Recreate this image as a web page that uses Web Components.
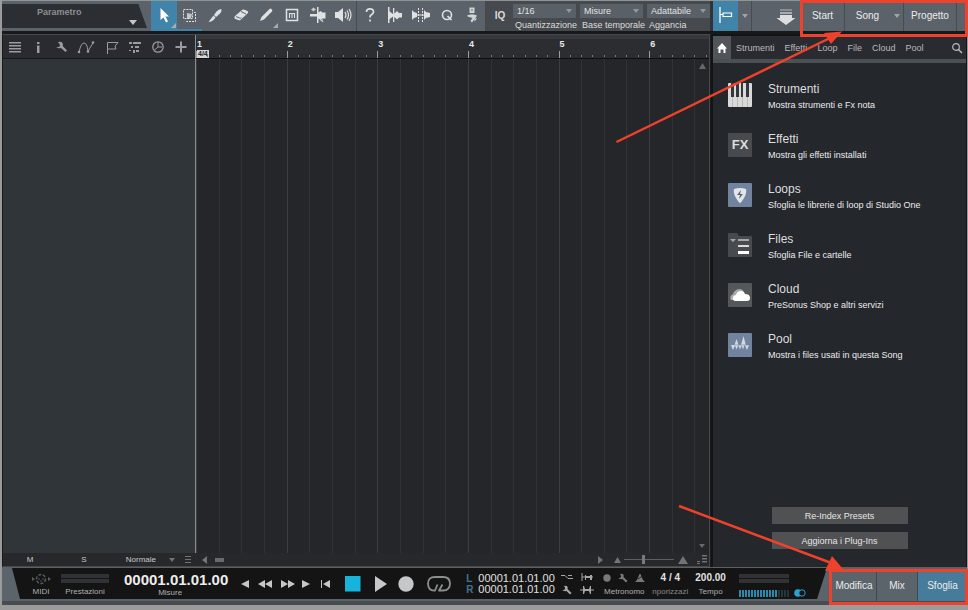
<!DOCTYPE html>
<html lang="it">
<head>
<meta charset="utf-8">
<title>Song</title>
<style>
html,body{height:100%}
body{margin:0;background:#9b9b9b;font-family:"Liberation Sans",Arial,sans-serif;font-size:9px;line-height:12px;color:#dcdcdc;overflow:hidden}
</style>
</head>
<body>
<daw-window></daw-window>
<script>
const ICONS = {
  arrow:[24,24,'<path d="M8.500 5v12l3-2.500 2.500 5 2-1-2.500-5h3.500z"/>'],
  range:[24,24,'<g fill="none" stroke="currentColor"><rect x="6.500" y="6.500" width="9" height="9" stroke-dasharray="2 1"/><path d="M17 9.500h1.500v9h-9V17" stroke-dasharray="2 1"/></g><path d="M10 10l5 1-1 4-4 1z" opacity=".8"/>'],
  knife:[24,24,'<path d="M18.500 6q-3 0-5 2.500L11 12l2 2 3.500-3Q19 9 18.500 6z"/><path d="M10.500 12.500l-5 6.500q3 0 5-2l2-2.500z"/>'],
  eraser:[24,24,'<path d="M6 13l7-6q1-1 2.500-.3l3 1.300q1.500 1 .2 2.300l-7 6.500q-1 .8-2 .4L6.500 16q-2-1-.5-3z"/><path d="M7 13.500l4 1.700q.8.300 1.500-.4M12 8.500l5 2.500" stroke="#5d646b" fill="none"/>'],
  pencil:[24,24,'<path d="M6 18l1.500-4 8-8q1-1 2.200.3t.3 2.200l-8 8z"/>'],
  mute:[24,24,'<rect x="6.500" y="6.500" width="11" height="11" fill="none" stroke="currentColor" stroke-width="1.500"/><path d="M9.500 15v-5M9.500 10.500h5V15M12 10.500V15" fill="none" stroke="currentColor" stroke-width="1.100"/>'],
  bend:[24,24,'<path d="M4 11h7V4h1.500v5.500l2-1.500 2 1.500h3v6h-3l-2 1.500-2-1.500V20H11v-6.500H4z"/><path d="M5 6.500l2.500-2L10 6.500l-2.500 2zM14 17.500l2.500-1.500 1 3.500z" opacity=".8"/>'],
  speaker:[24,24,'<path d="M4 9h3l5-4v14l-5-4H4z"/><path d="M14 9q2 3 0 6M16 7.500q3 4.500 0 9M18 6q4 6 0 12" fill="none" stroke="currentColor" stroke-width="1.200"/>'],
  help:[24,24,'<path d="M8.500 9q0-3.200 3.500-3.200T15.500 9q0 1.500-1.800 2.600T12 14.500M12 16.500v2" fill="none" stroke="currentColor" stroke-width="1.700"/>'],
  cut:[24,24,'<path d="M5 4h1.500v16H5zM10 5h1.300v14H10z"/><path d="M6 8l4 3 2-1 2-2 2 2h3v4.500h-3l-2 2-2-2-2-1-4 3z"/>'],
  gap:[24,24,'<path d="M3 7l2 2 3 1v4l-3 1-2 2zM15 7l2 2 4 1v4l-4 1-2 2z"/><path d="M9.500 5v14M13.500 5v14" stroke="currentColor" stroke-dasharray="2 1" fill="none"/><path d="M7 12h10" stroke="currentColor"/>'],
  quant:[24,24,'<circle cx="12" cy="12" r="4.500" fill="none" stroke="currentColor" stroke-width="1.600"/><path d="M12.500 13l4 4" stroke="currentColor" stroke-width="1.700"/>'],
  steps:[24,24,'<path d="M9.500 4.500h5v5.500h-5zM7.500 12h9v1.500l-4.500 6-1.500-1.500 2-3-5-1.500z" opacity=".9"/><path d="M11 6.500h2v1h-2z" fill="#5d646b"/><path d="M9.500 11h5v.6h-5zM14.500 15.500l2.500 0-2.500 3z"/>'],
  snap:[25,24,'<path d="M7 4v16" stroke="currentColor" stroke-width="1.300"/><path d="M7 11.500h3M10 10h8.500v3.500H10z" fill="none" stroke="currentColor" stroke-width="1.200"/>'],
  down:[24,24,'<path d="M6 5h12v2H6z" opacity=".35"/><path d="M6 8h12v2H6z" opacity=".6"/><path d="M6 11h12v3h3.500L12 21l-9.500-7H6z"/>'],
  list:[14,12,'<path d="M1 1h12v1.500H1zM1 4h12v1.500H1zM1 7h12v1.500H1zM1 10h12v1.500H1z"/>'],
  info:[14,14,'<path d="M6 2h2.500v2H6zM6 5.500h2.500V13H6z"/>'],
  wrench:[14,14,'<path d="M4 2q3-1 4.500 1 .8 1.500.2 3L13 10.500 11.500 12 7 8Q4.500 9 2 7q3.500.5 4-1T4 2z"/>'],
  curve:[18,14,'<path d="M2 12Q4 3 7 3t4 8L16 3" fill="none" stroke="currentColor"/><circle cx="2" cy="12" r="1.300"/><circle cx="11" cy="11.500" r="1.300"/><circle cx="16" cy="2.500" r="1.300"/>'],
  flag:[14,14,'<path d="M2.500 14V2.500h10.500l-3 3.500 1 3H2.500" fill="none" stroke="currentColor"/>'],
  blocks:[14,14,'<path d="M1 2h3v2H1zM5 2h8v2H5zM3 6h2v2H3zM7 6h4v2H7zM5 10h2v3H5zM8 10h3v2H8zM1 10h2v1H1z"/>'],
  clock:[14,14,'<circle cx="7" cy="7" r="5.200" fill="none" stroke="currentColor" stroke-width="1.300"/><path d="M7 2v5L3.500 10M7 7h4" fill="none" stroke="currentColor"/>'],
  plus:[14,14,'<path d="M6 1.500h2V6h4.500v2H8v4.500H6V8H1.500V6H6z"/>'],
  caret:[8,6,'<path d="M1 1h6L4 5z"/>'],
  bigcaret:[10,6,'<path d="M1 1h8L5 6z"/>'],
  left:[8,8,'<path d="M7 0v8L2 4z"/>'], right:[8,8,'<path d="M1 0v8l5-4z"/>'],
  up:[8,6,'<path d="M1 6h7L4.500 0z"/>'], bigup:[12,8,'<path d="M1 8h10L6 0z"/>'],
  home:[12,12,'<path d="M6 1l5 5.500H9.500V11h-2V7.500h-3V11h-2V6.500H1z"/>'],
  search:[12,12,'<circle cx="5" cy="5" r="3.300" fill="none" stroke="currentColor" stroke-width="1.200"/><path d="M7.500 7.500L11 11" stroke="currentColor" stroke-width="1.500"/>'],
  prev:[10,10,'<path d="M9 1v8L1 5z"/>'],
  rew:[16,10,'<path d="M8 1v8L1 5zM15 1v8L8 5z"/>'],
  fwd:[16,10,'<path d="M1 1v8l7-4zM8 1v8l7-4z"/>'],
  next:[10,10,'<path d="M1 1v8l8-4z"/>'],
  start:[12,10,'<path d="M1 1h1v8H1zM10 1v8L3 5z"/>'],
  stop:[16,16,'<path fill="#16b3dc" d="M0 0h15.500v15.500H0z"/>'],
  play:[14,16,'<path d="M1 0v16l12-8z"/>'],
  rec:[16,16,'<circle cx="8" cy="8" r="7.700"/>'],
  loop:[26,18,'<path d="M11.500 9.500l-2.500 6Q2 16 2 8.500 2 2 9 2h8q7 0 7 6.500 0 7-7 7h-4l3.500-6" fill="none" stroke="currentColor" stroke-width="1.800" stroke-linejoin="round"/>'],
  midi:[20,12,'<circle cx="10" cy="6" r="4.500" fill="none" stroke="currentColor" stroke-width="1.500" stroke-dasharray="3 1.500"/><circle cx="8" cy="6" r=".8"/><circle cx="12" cy="6" r=".8"/><circle cx="10" cy="8" r=".8"/><path d="M1 4l3 2-3 2zM17 4l3 2-3 2z"/>'],
  punch:[14,8,'<path d="M1 2.500h4l3 3h5M8 2.500h4" fill="none" stroke="currentColor"/>'],
  pin:[14,10,'<path d="M2 1v8M2 5h4M12 5h1" stroke="currentColor"/><path d="M5 3h1v1h4V3h2v5h-2V6H6v2H5z"/>'],
  pin2:[14,10,'<path d="M0 5h14" stroke="currentColor"/><path d="M3 1h1l1 3h4l1-3h1v8h-1L9 6H5L4 9H3z"/>'],
  wrenchs:[12,10,'<path d="M3 1q2.500-1 3.500.7.500 1.200 0 2.300L10.500 8 9 9.500 5.500 6Q3 6.500 1 5q2.500.2 3-1T3 1z"/>'],
  dot:[8,8,'<circle cx="4" cy="4" r="3.700"/>'],
  metro:[10,10,'<path d="M0 9h10L8 7 5.500 1h-1L2 7z"/><path d="M3 6l6-4" stroke="#141414" stroke-width=".8"/>'],
  grip:[10,9,'<path d="M5 0h5v1.500H5zM5 3h5v1.500H5zM0 6h3v1H0zM5 6h5v1.500H5zM0 8h3v1H0z"/>'],
  piano:[24,24,'<rect width="24" height="24" rx="1" fill="#d9d9d9"/><path fill="#33363b" d="M3 0h3v14H3zM8 0h3v14H8zM13 0h2v14h-2zM18 0h3v14h-3z"/><path d="M4.500 14v10M9.500 14v10M14.500 14v10M19.500 14v10" stroke="#b9b9b9"/>'],
  folder:[24,24,'<path fill="#474a4e" d="M1 0h8l2 3h12q1 0 1 1v19q0 1-1 1H1q-1 0-1-1V1q0-1 1-1z"/><path fill="#a5a7a9" d="M2 6h6L5 9zM10 6h11v2H10z"/><path fill="#d9dadb" d="M10 12h11v2H10z"/><path fill="#fff" d="M10 18h11v3H10z"/>'],
  cloud:[24,24,'<rect width="24" height="24" rx="1" fill="#55585b"/><path fill="#a8abad" d="M3 17q-2-4 2-6 1-4 6-5 5 0 5 5v6z"/><path fill="#fff" d="M7 18q-3-1-2-4 1-2 3-2 1-4 5-4 3 0 4 3 5 0 5 4 0 3-3 3z"/>'],
  pick:[24,24,'<rect width="24" height="24" rx="1" fill="#71839f"/><path fill="#e2e5e9" d="M6 6q6-2 12 0 1 4-2 9-3 5-4 5t-4-5Q5 10 6 6z"/><path fill="#5b6470" d="M13 7l-4 5h3l-1 4 4-5h-3z"/>'],
  pool:[24,24,'<rect width="24" height="24" rx="1" fill="#71839f"/><path fill="#d3d9e1" d="M3 12h3.500l2-6 2 6h2.500l2.500-9 2.300 9H21l-2 5-2-4.500h-.8L15 16.500 13.500 12.500 12 16.500 10.500 12.500h-.3L8.500 16.500 7 12.500 5 17z"/><path d="M6.500 12h14" stroke="#71839f" stroke-width=".6"/>'],
};
const BASE = `*{box-sizing:border-box}button,select,input,a{font:inherit;color:inherit;margin:0}button{appearance:none;border:0;padding:0;background:none;display:flex;align-items:center;justify-content:center}a{text-decoration:none}`;
function define(name, html){
  const t = document.createElement('template');
  customElements.define(name, class extends HTMLElement{
    constructor(){super();
      t.innerHTML = '<style>'+BASE+'</style>'+(typeof html==='function'?html(this):html);
      this.attachShadow({mode:'open'}).append(t.content.cloneNode(true));}
  });
}
const ic = n => `<ui-icon name="${n}"></ui-icon>`;

define('ui-icon', el => {
  const [w,h,b] = ICONS[el.getAttribute('name')];
  return `<style>:host{display:block;flex:none}svg{display:block;fill:currentColor}</style><svg width="${w}" height="${h}" viewBox="0 0 ${w} ${h}" aria-hidden="true">${b}</svg>`;
});

define('tool-button', el => `<style>
:host{display:flex;flex:1 1 24px;min-width:0;position:relative}
button{flex:1;min-width:0;color:#dfe1e2;border-bottom:2px solid transparent}
:host([active]) button{background:#4184a9;color:#fff}
:host([marked]) button{border-color:#4184a9}
:host([more])::after{content:"";position:absolute;right:1px;bottom:3px;border:solid transparent;border-width:0 0 5px 5px;border-bottom-color:#9fb0bb}
</style><button aria-label="${el.getAttribute('icon')}">${ic(el.getAttribute('icon'))}</button>`);

define('param-box', `<style>
:host{display:flex;flex:0 0 149px;padding:3px 4px 3px 0}
button{flex:1;align-items:stretch;justify-content:space-between;background:#2b2e33;clip-path:polygon(0 0,94% 0,100% 100%,0 100%);color:#8d8f92;font-weight:bold;padding:2px 9px 3px 35px}
ui-icon{align-self:flex-end;color:#c4c6c8}
</style><button>Parametro ${ic('bigcaret')}</button>`);

define('select-field', el => `<style>
:host{display:flex;flex-direction:column;flex:1 1 0;min-width:0;gap:1px}
.box{display:flex;align-items:center;background:#5a6067;height:14px;color:#e2e2e2}
select{appearance:none;border:0;background:none;padding:0 0 0 4px;flex:1;min-width:0;height:14px}
ui-icon{color:#92979b;margin-right:3px}
label{padding-left:2px;white-space:nowrap}
</style><div class="box"><select id="s"><option>${el.getAttribute('value')}</option></select>${ic('caret')}</div><label for="s">${el.getAttribute('label')}</label>`);

define('top-bar', `<style>
:host{display:flex;flex:0 0 34px;background:#5c6269;border-top:1px solid #8f9597;border-bottom:3px solid #17191b}
.group{display:flex;flex:0 0 205px}
.edit{flex-basis:129px}
.sep{border-left:1px solid #464c52}
.quant{display:flex;background:#464a4e;flex:0 0 228px;padding:3px 0 0 6px;gap:4px;border-right:3px solid #303439}
.iq{flex:0 0 18px;font-weight:bold;font-size:10px;padding-bottom:4px}
.snap{flex:0 0 25px}
.caret{flex:0 0 13px;color:#a0a4a7}
.space{flex:1;display:flex;align-items:center;justify-content:flex-end;padding-right:2px;color:#dedede}
nav{display:flex;font-size:10px}
nav button{border-left:1px solid #464c52;color:#ececec}
</style>
<param-box></param-box>
<div class="group"><tool-button icon="arrow" active more></tool-button><tool-button icon="range" marked></tool-button><tool-button icon="knife"></tool-button><tool-button icon="eraser"></tool-button><tool-button icon="pencil" more></tool-button><tool-button icon="mute"></tool-button><tool-button icon="bend"></tool-button><tool-button icon="speaker"></tool-button></div>
<div class="group edit sep"><tool-button icon="help"></tool-button><tool-button icon="cut"></tool-button><tool-button icon="gap"></tool-button><tool-button icon="quant"></tool-button><tool-button icon="steps"></tool-button></div>
<div class="quant"><button class="iq">IQ</button><select-field value="1/16" label="Quantizzazione"></select-field><select-field value="Misure" label="Base temporale"></select-field><select-field value="Adattabile" label="Aggancia"></select-field></div>
<tool-button class="snap" icon="snap" active></tool-button><button class="caret" aria-label="Opzioni">${ic('caret')}</button>
<div class="space sep">${ic('down')}</div>
<nav><button style="width:44px">Start</button><button style="width:46px">Song</button><button class="caret" style="border:0" aria-label="Songs">${ic('caret')}</button><button style="width:53px">Progetto</button><button style="width:11px" aria-label="Altro"></button></nav>`);

define('track-list', `<style>
:host{display:flex;flex-direction:column;flex:0 0 193px;border-right:1px solid #898c8e}
.tools{display:flex;align-items:center;justify-content:space-between;padding:0 7px 0 5px;height:24px;background:#292b30;color:#9a9c9f;border-bottom:1px solid #15171a}
.body{flex:1;background:#30353a}
.foot{display:flex;align-items:center;height:13px;background:#26282b;margin-right:-1px;font-size:8px;color:#c9cacb}
.foot button{flex:0 0 54px}.foot .mode{flex:1;justify-content:flex-end;gap:12px;padding-right:20px}
ui-icon{color:inherit}.foot ui-icon{color:#717376}
</style>
<div class="tools">${['list','info','wrench','curve','flag','blocks','clock','plus'].map(n=>`<button aria-label="${n}">${ic(n)}</button>`).join('')}</div>
<div class="body"></div>
<div class="foot"><button>M</button><button>S</button><button class="mode">Normale ${ic('caret')}</button></div>`);

define('time-ruler', `<style>
:host{display:flex;height:24px;overflow:hidden;background:#2b2d31;border-top:4px solid #35383c;border-bottom:1px solid #0e0f10}
.bar{flex:0 0 calc(100% / 5.660);position:relative;display:flex;flex-direction:column;font-size:9px;font-weight:bold;line-height:11px;color:#e8e8e8;border-left:1px solid #77797b;border-image:linear-gradient(transparent 60%,#9a9c9e 60%) 1}
.bar:first-child{border-image:none;border-color:#d8d8d8}
.sig{align-self:flex-start;background:#d5d5d5;color:#222;font-size:7px;line-height:8px;padding:0 1px}
.ticks{display:flex;height:3px;position:absolute;left:0;right:0;bottom:0}.ticks i{flex:1;border-right:1px solid #77797b;height:2px}.ticks i:last-child{border:0}
</style>${[1,2,3,4,5,6].map(n=>`<div class="bar"><span>${n}</span>${n==1?'<span class="sig">4/4</span>':''}<span class="ticks">${'<i></i>'.repeat(8)}</span></div>`).join('')}`);

define('track-grid', `<style>
:host{display:flex;flex:1;overflow:hidden;background:#242629}
.bar{flex:0 0 calc(100% / 5.660);display:flex}.bar i{flex:1;border-left:1px solid #303235}.bar i:first-child{border-color:#3b3d40}
</style>${'<div class="bar"><i></i><i></i><i></i><i></i></div>'.repeat(6)}`);

define('arrange-view', `<style>
:host{display:flex;flex:1;min-width:0;border:1px solid #45494d;border-left-color:#17191b}
.right{display:flex;flex-direction:column;flex:1;min-width:0;position:relative}
.foot{display:flex;align-items:center;height:13px;background:#26282b;color:#717376;padding:0 2px 0 4px}
.thumb{width:9px;height:4px;background:#686a6d;margin-left:7px}
.grow{flex:1}.foot .s{margin-left:8px}
input{appearance:none;width:50px;height:9px;background:linear-gradient(#5d5f62,#5d5f62) center/100% 1px no-repeat;margin:0 3px}
input::-webkit-slider-thumb{appearance:none;width:3px;height:9px;background:#77797c}
.v{position:absolute;right:3px;color:#66686b}.t{top:28px}.b{bottom:17px}
</style><track-list></track-list>
<div class="right"><time-ruler></time-ruler><track-grid></track-grid>
<div class="foot"><svg width="8" height="7" fill="currentColor" style="margin-left:-16px"><path d="M1 0h6v1H1zM1 3h6v1H1zM1 6h6v1H1z"/></svg><span style="width:8px"></span>${ic('left')}<span class="thumb"></span><span class="grow"></span>${ic('right')}<span class="s">${ic('up')}</span><input type="range" aria-label="Zoom" value="38">${ic('bigup')}<span class="s">${ic('grip')}</span></div>
<span class="v t">${ic('up')}</span><span class="v b">${ic('caret')}</span></div>`);

define('browser-item', el => `<style>
:host{display:block;height:50px}
a{display:grid;grid-template-columns:24px 1fr;column-gap:16px;align-items:start}
.i{width:24px;height:24px;margin-top:1px;display:flex;align-items:center;justify-content:center}
.fx{background:#474a4f;border-radius:1px;font:bold 13px/24px "Liberation Sans",Arial,sans-serif;color:#dcdddd}
.t{display:flex;flex-direction:column;gap:3px;color:#ececec}
strong{font-size:12px;font-weight:normal;line-height:14px;color:#dedede}
</style><a href="#"><span class="i ${el.hasAttribute('fx')?'fx':''}">${el.hasAttribute('fx')?'FX':ic(el.getAttribute('icon'))}</span><span class="t"><strong><slot name="title"></slot></strong><slot></slot></span></a>`);

define('browser-panel', `<style>
:host{display:flex;flex-direction:column;flex:0 0 256px;background:#24272c;border:2px solid #121416;border-width:2px 1px 0 2px}
nav{display:flex;align-items:center;height:23px;background:#292b30;color:#b9babc}
nav button{height:100%;white-space:nowrap}.h{flex:0 0 18px;background:#50555a;color:#fff;margin-right:5px}
nav .tabs{display:flex;gap:10px;height:100%}.s{margin-left:auto;padding-right:3px}
.strip{height:4px;background:#4b5055}
.items{padding:19px 0 0 15px;flex:1}
.acts{display:flex;flex-direction:column;align-items:center;gap:8px;padding-bottom:18px}
.acts button{width:136px;height:17px;background:#505153;color:#e5e5e5}
</style>
<nav><button class="h" aria-label="Home">${ic('home')}</button><span class="tabs"><button>Strumenti</button><button>Effetti</button><button>Loop</button><button>File</button><button>Cloud</button><button>Pool</button></span><button class="s" aria-label="Cerca">${ic('search')}</button></nav>
<div class="strip"></div>
<div class="items">
<browser-item icon="piano"><span slot="title">Strumenti</span>Mostra strumenti e Fx nota</browser-item>
<browser-item fx><span slot="title">Effetti</span>Mostra gli effetti installati</browser-item>
<browser-item icon="pick"><span slot="title">Loops</span>Sfoglia le librerie di loop di Studio One</browser-item>
<browser-item icon="folder"><span slot="title">Files</span>Sfoglia File e cartelle</browser-item>
<browser-item icon="cloud"><span slot="title">Cloud</span>PreSonus Shop e altri servizi</browser-item>
<browser-item icon="pool"><span slot="title">Pool</span>Mostra i files usati in questa Song</browser-item>
</div>
<div class="acts"><button>Re-Index Presets</button><button>Aggiorna i Plug-Ins</button></div>`);

define('transport-bar', `<style>
:host{display:flex;flex:0 0 38px;background:#5c646b;border-top:1px solid #5e6163;border-bottom:4px solid #484c50}
.deck{flex:1;display:flex;height:31px;background:#141414;clip-path:polygon(10px 0,100% 0,calc(100% - 10px) 100%,18px 100%);padding:0 0 0 26px;color:#aeb0b1}
.c{display:flex;flex-direction:column;align-items:center;justify-content:space-between;padding:4px 0 2px;font-size:8px;line-height:10px;white-space:nowrap;flex:none}
.midi{width:26px;padding-top:5px}.midi ui-icon{color:#5a5c5e}
.perf{width:48px;margin-left:7px;padding-top:6px;align-items:stretch;text-align:center}
.bars{display:grid;gap:1px}.bars i{height:4px;background:#303236}
.time{font-weight:bold;font-size:15px;line-height:17px;color:#ededed}
.play{display:flex;align-items:center;color:#c6c7c8;margin-left:12px;padding-bottom:0;flex:none}
.loc{display:grid;grid-template-columns:12px 76px;align-content:center;margin-left:14px;font-size:11px;line-height:11px;color:#e0e0e0}
.loc b{font-size:10px;color:#3e7691}
.g{display:grid;grid-template-columns:14px 14px;column-gap:6px;align-content:center;row-gap:3px;align-items:center;justify-items:center;margin-left:6px;color:#a4a6a7;height:31px}
.v{font-size:10px;line-height:12px;color:#e2e2e2;font-weight:bold}
.m{display:flex;gap:6px;height:12px;align-items:center;color:#77797b}
.meter{display:flex;flex-direction:column;gap:6px;padding:6px 0;margin-left:13px}
.led{display:flex;align-items:center;gap:1px}.led i{width:2px;height:7px;background:#278bb0}.led i.o{background:#26343b}
nav{display:flex;font-size:10px;padding-top:2px;margin-left:4px}
nav button{color:#ebebeb;border-left:1px solid #42484e}nav .on{background:#477b9a}
</style>
<div class="deck">
<div class="c midi">${ic('midi')}<span>MIDI</span></div>
<div class="c perf"><span class="bars"><i></i><i></i></span><span>Prestazioni</span></div>
<div class="c" style="margin-left:15px;padding-top:3px"><span class="time">00001.01.01.00</span><span style="margin-right:12px">Misure</span></div>
<div class="play"><button aria-label="Indietro">${ic('prev')}</button><button style="margin-left:7px" aria-label="Riavvolgi">${ic('rew')}</button><button style="margin-left:7px" aria-label="Avanza">${ic('fwd')}</button><button style="margin-left:5px" aria-label="Avanti">${ic('next')}</button><button style="margin-left:9px" aria-label="Inizio">${ic('start')}</button><button style="margin-left:13px" aria-label="Stop">${ic('stop')}</button><button style="margin-left:13px" aria-label="Play">${ic('play')}</button><button style="margin-left:10px" aria-label="Registra">${ic('rec')}</button><button style="margin-left:12px;color:#8c8e8f" aria-label="Loop">${ic('loop')}</button></div>
<div class="loc"><b>L</b><span>00001.01.01.00</span><b>R</b><span>00001.01.01.00</span></div>
<div class="g">${ic('punch')}${ic('pin')}${ic('wrenchs')}${ic('pin2')}</div>
<div class="c" style="margin-left:9px"><span class="m">${ic('dot')}${ic('wrenchs')}${ic('metro')}</span><span>Metronomo</span></div>
<div class="c" style="margin-left:7px;color:#87898b"><span class="v">4 / 4</span><span>nporizzazi</span></div>
<div class="c" style="margin-left:7px"><span class="v">200.00</span><span>Tempo</span></div>
<div class="meter"><span class="bars" style="width:50px"><i></i><i></i></span><span class="led">${'<i></i>'.repeat(13)}${'<i class="o"></i>'.repeat(4)}<svg width="12" height="8" style="margin-left:4px"><circle cx="4" cy="4" r="3.800" fill="#27a4cf"/><circle cx="8" cy="4" r="3.200" fill="#141414" stroke="#27a4cf"/></svg></span></div>
</div>
<nav><button style="width:45px">Modifica</button><button style="width:41px">Mix</button><button class="on" style="width:50px">Sfoglia</button></nav>`);

define('callout-layer', `<style>:host{position:absolute;inset:0;pointer-events:none}svg{position:absolute;right:0}</style>
<svg width="368" height="160" style="top:0" fill="none" stroke="#ee422d"><rect x="201.500" y="1.500" width="165" height="34" stroke-width="3"/><path d="M16.500 142L232 37" stroke-width="2.500"/><path d="M242 31.500l-18 1.500 7 11z" fill="#ee422d" stroke="none"/></svg>
<svg width="308" height="120" style="bottom:0" fill="none" stroke="#ee422d"><rect x="170.500" y="80.500" width="136" height="33" stroke-width="3"/><path d="M19 16L174 74" stroke-width="2.500"/><path d="M183 79l-11-13-7 15z" fill="#ee422d" stroke="none"/></svg>`);

define('daw-window', `<style>
:host{box-sizing:border-box;display:flex;flex-direction:column;height:100vh;position:relative;padding:0 1px 5px 2px}
main{display:flex;flex:1;min-height:0;background:#1a1c1f;gap:1px}
</style><top-bar></top-bar><main><arrange-view></arrange-view><browser-panel></browser-panel></main><transport-bar></transport-bar><callout-layer></callout-layer>`);
</script>
</body>
</html>
